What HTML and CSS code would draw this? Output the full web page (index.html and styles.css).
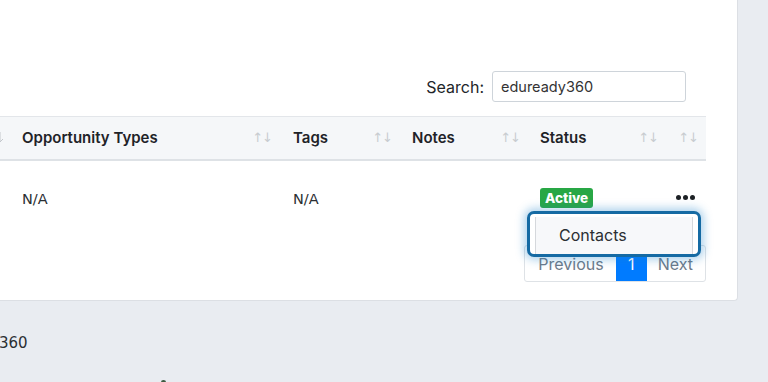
FILE: index.html
```html
<!DOCTYPE html>
<html>
<head>
<meta charset="utf-8">
<link rel="stylesheet" href="styles.css">
</head>
<body>
<div class="page">
  <div class="card">
    <div class="search-row">
      <label class="search-label">Search:</label>
      <div class="search-input">eduready360</div>
    </div>
    <div class="table">
      <div class="thead">
        <div class="th c0"><svg class="cut-arrow" width="6" height="14" viewBox="0 0 6 14"><path d="M1 2 V12 M-2 9 L1 12 L4 9" fill="none" stroke="#c3c7cc" stroke-width="1"/></svg></div>
        <div class="th c1"><span>Opportunity Types</span><span class="sort">↑↓</span></div>
        <div class="th c2"><span>Tags</span><span class="sort">↑↓</span></div>
        <div class="th c3"><span>Notes</span><span class="sort">↑↓</span></div>
        <div class="th c4"><span>Status</span><span class="sort">↑↓</span></div>
        <div class="th c5"><span></span><span class="sort">↑↓</span></div>
      </div>
      <div class="trow">
        <div class="td c0"></div>
        <div class="td c1 na">N/A</div>
        <div class="td c2 na">N/A</div>
        <div class="td c3"></div>
        <div class="td c4"><span class="badge">Active</span></div>
        <div class="td c5"><span class="dots"><i></i><i></i><i></i></span></div>
      </div>
    </div>
    <div class="pager-row">
      <div class="pager">
        <span class="pg prev">Previous</span>
        <span class="pg active">1</span>
        <span class="pg next">Next</span>
      </div>
    </div>
    <div class="dropdown">
      <div class="menu"><span class="item">Contacts</span></div>
    </div>
  </div>
  <div class="footer">360</div>
  <div class="footer-mark"></div>
</div>
</body>
</html>
```

FILE: styles.css
```css
* { box-sizing: border-box; }
html, body { margin: 0; padding: 0; }
body {
  background: #e9ecf1;
  width: 768px;
  height: 382px;
  overflow: hidden;
  font-family: Inter, "Noto Sans", sans-serif;
  color: #212529;
}
.page { position: relative; height: 382px; }
.card {
  position: relative;
  width: 738px;
  height: 301px;
  background: #fff;
  border-right: 1px solid #dcdfe4;
  border-bottom: 1px solid #dcdfe4;
  border-bottom-right-radius: 4px;
  padding-top: 71px;
}
.search-row {
  display: flex;
  justify-content: flex-end;
  align-items: center;
  width: 706px;
  height: 31px;
}
.search-label {
  font-size: 16px;
  color: #212529;
  margin-right: 8px;
}
.search-input {
  width: 194px;
  height: 31px;
  border: 1px solid #ced4da;
  border-radius: 3px;
  font-size: 14.5px;
  color: #333;
  padding: 0 8px;
  line-height: 29px;
  margin-right: 20px;
}
.table { margin-top: 14px; width: 706px; }
.thead {
  display: flex;
  height: 45px;
  background: #f5f7f9;
  border-top: 1px solid #e3e6ea;
  border-bottom: 2px solid #dee2e6;
}
.th {
  display: flex;
  align-items: center;
  justify-content: space-between;
  font-size: 15px;
  font-weight: 600;
  color: #1f2328;
  padding-bottom: 2px;
}
.sort {
  color: #c8ccd0;
  font-size: 13px;
  font-weight: 400;
  letter-spacing: -1px;
  font-family: "DejaVu Sans", sans-serif;
  margin-right: 8px;
}
.c0 { width: 8px; overflow: hidden; }
.cut-arrow { display: block; margin-left: -1px; }
.c1 { width: 272px; padding-left: 14px; }
.c2 { width: 120px; padding-left: 13px; }
.c3 { width: 128px; padding-left: 12px; }
.c4 { width: 138px; padding-left: 12px; }
.c5 { width: 40px; padding-left: 12px; }
.trow { display: flex; height: 76px; align-items: center; }
.td { display: flex; align-items: center; }
.na {
  font-family: "DejaVu Sans", sans-serif;
  font-size: 14.5px;
  color: #2b2f33;
}
.badge {
  display: inline-block;
  background: #28a745;
  color: #fff;
  font-size: 13.5px;
  font-weight: 800;
  padding: 1px 5px;
  border-radius: 3px;
  line-height: 18px;
  margin-top: -2px;
}
.dots { display: flex; gap: 2px; margin-left: -2px; margin-top: -3px; }
.dots i { width: 5px; height: 5px; border-radius: 50%; background: #1d2125; display: block; }
.pager-row {
  display: flex;
  justify-content: flex-end;
  width: 706px;
  margin-top: 8px;
}
.pager {
  display: flex;
  height: 37px;
  border: 1px solid #dee2e6;
  border-radius: 3px;
}
.pg {
  font-size: 16px;
  color: #6c7a89;
  display: flex;
  align-items: center;
  padding: 0 12px 0 13px;
}
.pg.active {
  background: #007bff;
  color: #fff;
  width: 31px;
  justify-content: center;
  padding: 0;
}
.pg.next { padding: 0 12px 0 11px; }
.dropdown {
  position: absolute;
  left: 527px;
  top: 211px;
  width: 174px;
  height: 46px;
  border: 3px solid #156aa3;
  border-radius: 7px;
  box-shadow: 0 0 8px 3px rgba(30, 130, 200, 0.35);
  background: #fff;
  overflow: hidden;
}
.menu {
  margin: 3px 5px 0 5px;
  height: 40px;
  background: #f7f8fa;
  border-left: 1px solid #d5d8dc;
  border-right: 1px solid #d5d8dc;
  display: flex;
  align-items: center;
}
.item {
  font-size: 16px;
  color: #2b2f33;
  padding-left: 23px;
  margin-top: -5px;
}
.footer {
  font-family: "DejaVu Sans", sans-serif;
  font-size: 15px;
  color: #2b2f33;
  margin-top: 33px;
  margin-left: -1px;
}
.footer-mark {
  position: absolute;
  left: 161px;
  top: 380px;
  width: 5px;
  height: 4px;
  border-radius: 50%;
  background: #3b5a40;
}
```
